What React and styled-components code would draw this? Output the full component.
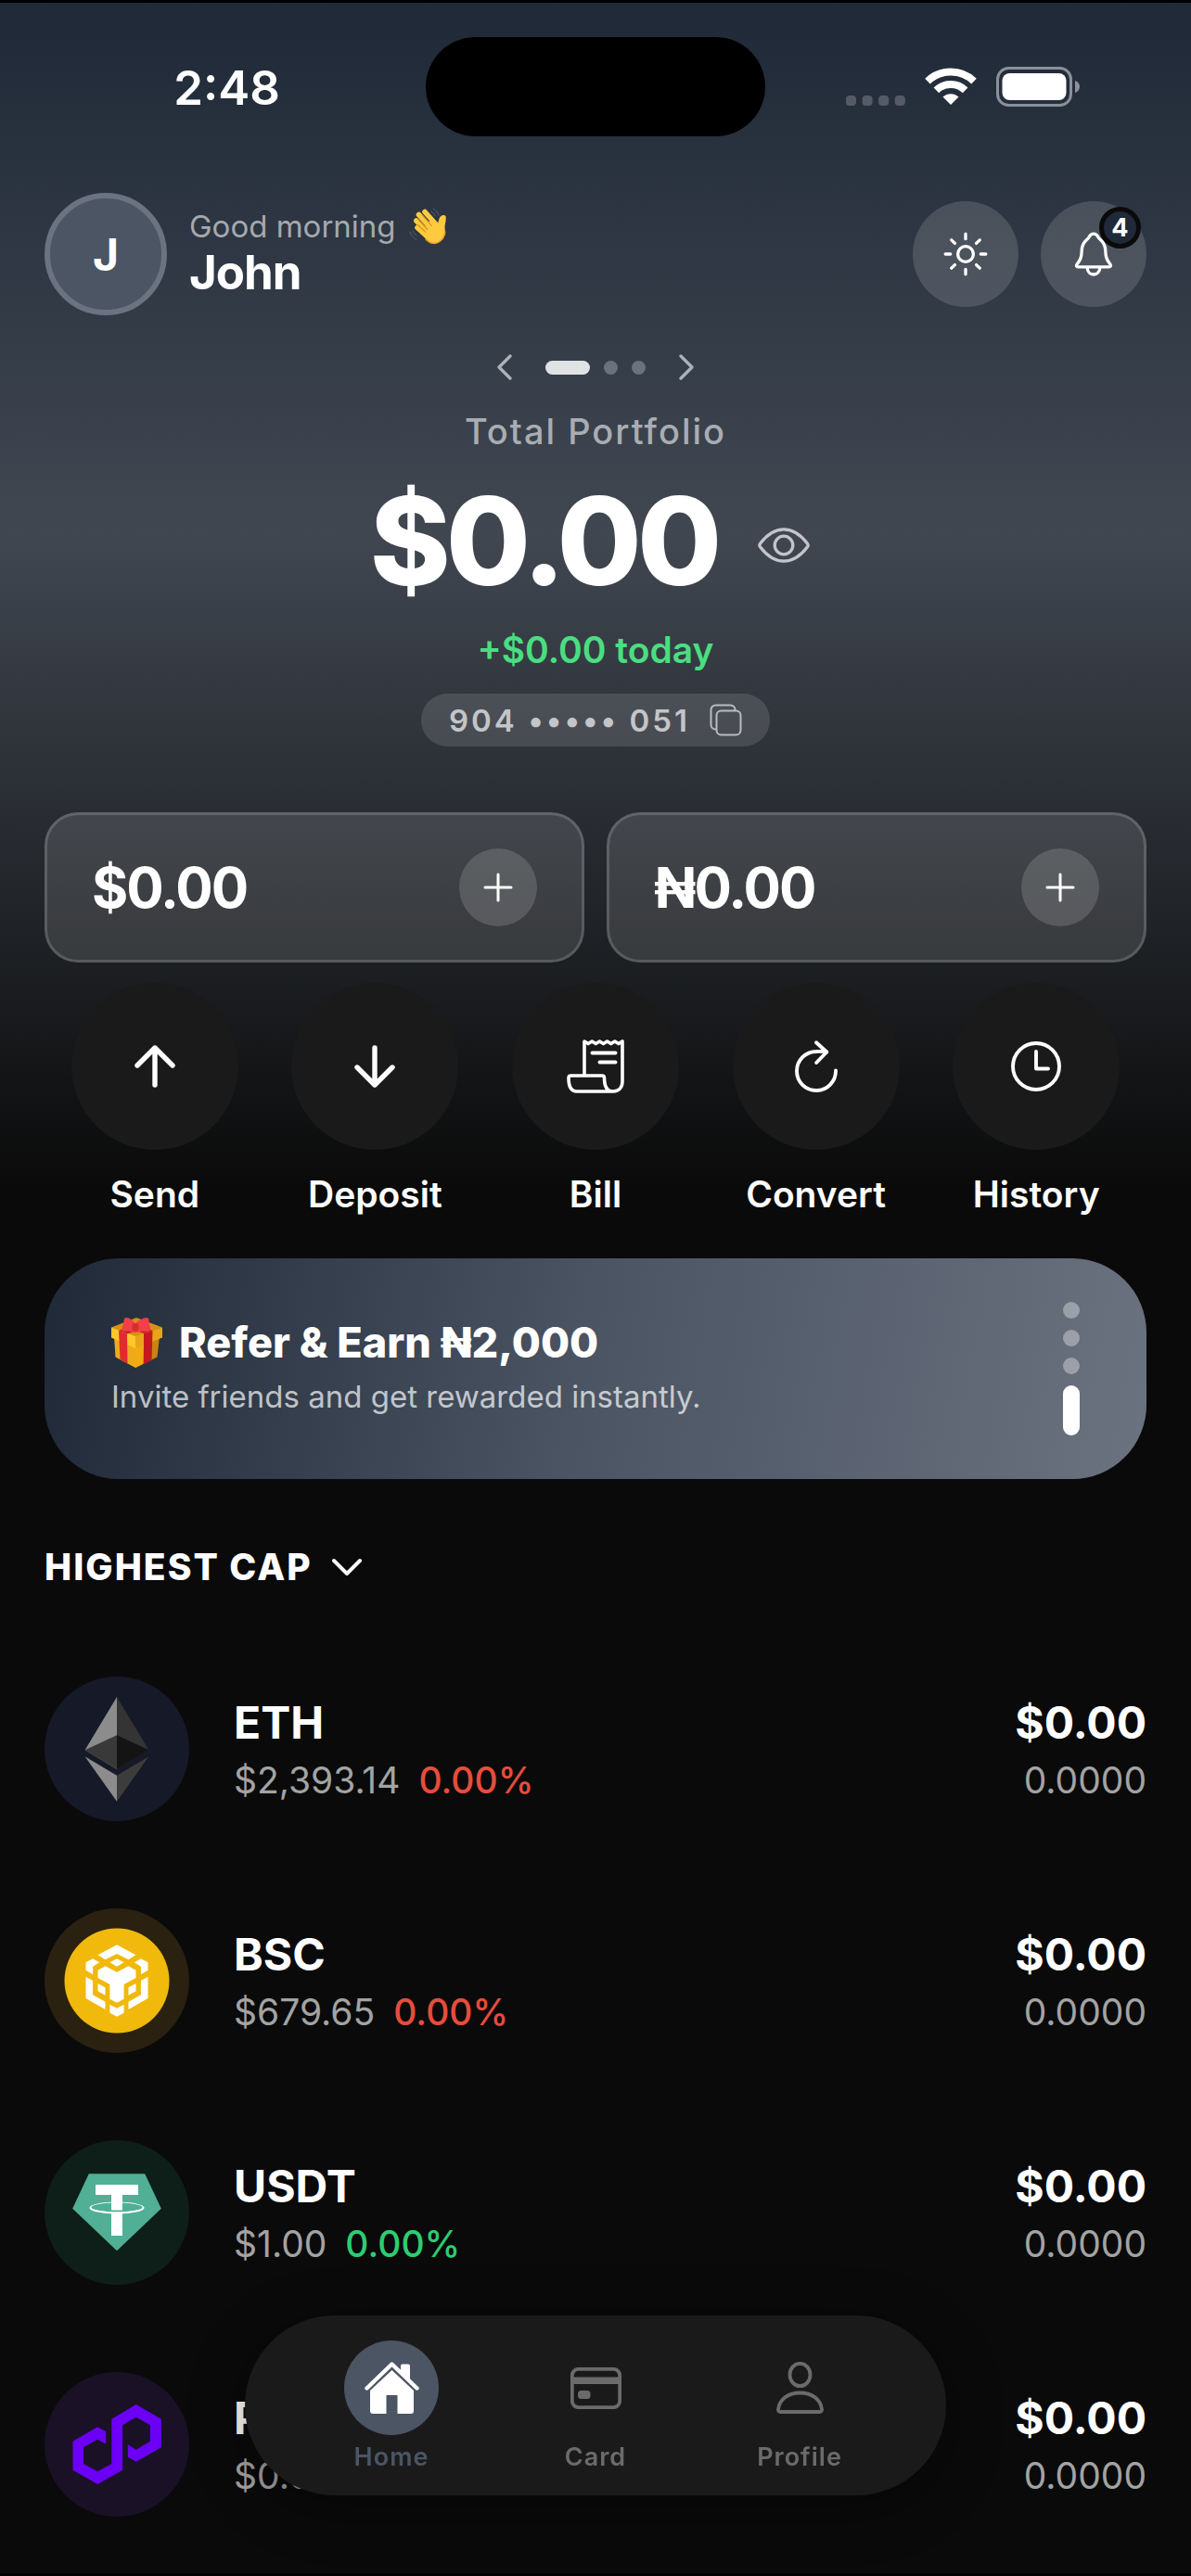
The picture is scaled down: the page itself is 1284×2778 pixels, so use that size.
import { useState } from 'react'
import styled, { createGlobalStyle } from 'styled-components'

const acoes = [
    { nome: 'Send', icone: <IconeSeta /> },
    { nome: 'Deposit', icone: <IconeSeta baixo /> },
    { nome: 'Bill', icone: <IconeConta /> },
    { nome: 'Convert', icone: <IconeConverter /> },
    { nome: 'History', icone: <IconeRelogio /> }
]

const moedas = [
    { nome: 'ETH', preco: '$2,393.14', variacao: '0.00%', alta: false, fundo: '#161928', logo: <LogoEth /> },
    { nome: 'BSC', preco: '$679.65', variacao: '0.00%', alta: false, fundo: '#2a2110', logo: <LogoBsc /> },
    { nome: 'USDT', preco: '$1.00', variacao: '0.00%', alta: true, fundo: '#0e1e19', logo: <LogoUsdt /> },
    { nome: 'POL', preco: '$0.09', variacao: '0.00%', alta: false, fundo: '#1a1127', logo: <LogoPol /> }
]

const abas = [
    { nome: 'Home', icone: <IconeCasa /> },
    { nome: 'Card', icone: <IconeCartao /> },
    { nome: 'Profile', icone: <IconePerfil /> }
]

function App() {
    const [visivel, setVisivel] = useState(true)
    const [pagina, setPagina] = useState(0)
    const [aba, setAba] = useState('Home')

    return (
        <>
            <GlobalStyle />
            <Tela>
                <BarraStatus>
                    <Hora>2:48</Hora>
                    <Ilha />
                    <Sinais>
                        <IconeSinal />
                        <IconeWifi />
                        <IconeBateria />
                    </Sinais>
                </BarraStatus>

                <Cabecalho>
                    <Avatar>J</Avatar>
                    <div>
                        <Saudacao>Good morning <IconeMao /></Saudacao>
                        <NomeUsuario>John</NomeUsuario>
                    </div>
                    <BotoesTopo>
                        <BotaoTopo aria-label="Theme"><IconeSol /></BotaoTopo>
                        <BotaoTopo aria-label="Notifications">
                            <IconeSino />
                            <Contador>4</Contador>
                        </BotaoTopo>
                    </BotoesTopo>
                </Cabecalho>

                <Saldo>
                    <Paginador>
                        <BotaoLimpo aria-label="Previous" onClick={() => setPagina((pagina + 2) % 3)}><IconeDivisa /></BotaoLimpo>
                        <Pontos>
                            {[0, 1, 2].map(p => <Ponto key={p} $ativo={p === pagina} />)}
                        </Pontos>
                        <BotaoLimpo aria-label="Next" onClick={() => setPagina((pagina + 1) % 3)}><IconeDivisa direita /></BotaoLimpo>
                    </Paginador>
                    <RotuloSaldo>Total Portfolio</RotuloSaldo>
                    <LinhaSaldo>
                        <ValorSaldo>{visivel ? '$0.00' : '••••'}</ValorSaldo>
                        <BotaoOlho aria-label="Toggle balance" onClick={() => setVisivel(!visivel)}><IconeOlho /></BotaoOlho>
                    </LinhaSaldo>
                    <Hoje>+$0.00 today</Hoje>
                    <BotaoConta aria-label="Copy account number">
                        <span>904 ••••• 051</span>
                        <IconeCopiar />
                    </BotaoConta>
                </Saldo>

                <Carteiras>
                    {['$0.00', '₦0.00'].map(valor => (
                        <Carteira key={valor}>
                            <ValorCarteira>{valor}</ValorCarteira>
                            <BotaoMais aria-label="Add money"><IconeMais /></BotaoMais>
                        </Carteira>
                    ))}
                </Carteiras>

                <Acoes>
                    {acoes.map(a => (
                        <BotaoAcao key={a.nome}>
                            <CirculoAcao>{a.icone}</CirculoAcao>
                            {a.nome}
                        </BotaoAcao>
                    ))}
                </Acoes>

                <Banner>
                    <div>
                        <TituloBanner><IconePresente />Refer &amp; Earn ₦2,000</TituloBanner>
                        <TextoBanner>Invite friends and get rewarded instantly.</TextoBanner>
                    </div>
                    <Indicadores>
                        <Indicador />
                        <Indicador />
                        <Indicador />
                        <Indicador $ativo />
                    </Indicadores>
                </Banner>

                <BotaoOrdem>
                    HIGHEST CAP
                    <IconeAbrir />
                </BotaoOrdem>

                <Lista>
                    {moedas.map(m => (
                        <LinhaMoeda key={m.nome}>
                            <CirculoMoeda $fundo={m.fundo}>{m.logo}</CirculoMoeda>
                            <Dados>
                                <NomeMoeda>{m.nome}</NomeMoeda>
                                <Preco>{m.preco}<Variacao $alta={m.alta}>{m.variacao}</Variacao></Preco>
                            </Dados>
                            <Posse>
                                <NomeMoeda>$0.00</NomeMoeda>
                                <Preco>0.0000</Preco>
                            </Posse>
                        </LinhaMoeda>
                    ))}
                </Lista>

                <AreaMenu>
                    <Menu>
                        {abas.map(a => (
                            <BotaoAba key={a.nome} $ativo={a.nome === aba} onClick={() => setAba(a.nome)}>
                                <CirculoAba $ativo={a.nome === aba}>{a.icone}</CirculoAba>
                                {a.nome}
                            </BotaoAba>
                        ))}
                    </Menu>
                </AreaMenu>
            </Tela>
        </>
    )
}

function IconeSinal() {
    return (
        <svg width="64" height="40" viewBox="0 0 64 40" fill="#fff" fillOpacity="0.22">
            <rect x="0" y="29" width="11" height="11" rx="4" />
            <rect x="17.6" y="29" width="11" height="11" rx="4" />
            <rect x="35.2" y="29" width="11" height="11" rx="4" />
            <rect x="52.8" y="29" width="11" height="11" rx="4" />
        </svg>
    )
}

function IconeWifi() {
    return (
        <svg width="56" height="41" viewBox="0 0 56 41" fill="none" stroke="#fff" strokeWidth="8">
            <path d="M3 14.6a36 36 0 0 1 50 0" />
            <path d="M12.4 24.3a22.5 22.5 0 0 1 31.2 0" />
            <path d="M19.5 31.5a12.5 12.5 0 0 1 17 0L28 40z" fill="#fff" stroke="none" />
        </svg>
    )
}

function IconeBateria() {
    return (
        <svg width="90" height="43" viewBox="0 0 90 43">
            <rect x="1.5" y="1.5" width="79" height="40" rx="12" fill="none" stroke="#8b9099" strokeWidth="3" />
            <rect x="6.5" y="7" width="69" height="29" rx="8" fill="#fff" />
            <path d="M85 15c3.3 1 5 3.6 5 6.5s-1.7 5.500-5 6.500z" fill="#8b9099" />
        </svg>
    )
}

function IconeMao() {
    return (
        <svg width="42" height="40" viewBox="0 0 42 40" fill="none" strokeLinecap="round" role="img" aria-label="waving hand">
            <path d="M26 1c3 1.5 5 4 6 7M24 4c2 1 3.5 3 4.2 5M1 26c1 3.5 3.5 6.5 7 8.5M4 25c.8 2 2 3.5 4 5" stroke="#59616b" strokeWidth="1" />
            <path d="M39.5 9c.8 5-.7 7-1 12 1 7-.5 12-5 15.5-5 3.500-10 2.500-14-1.500L12 27 24 12l7 6c.8-4 1.500-8 4-9.500 1.500-.8 3.500-.8 4.500.5z" fill="#ffca3e" />
            <path d="M17 4.500L30 19M10.500 7.500L24 22M7.800 14L20 26M9 21.500l10 9" stroke="#ffca3e" strokeWidth="5.6" />
            <path d="M14.300 8l10 11.500M9.800 12.600L20 23.500M9.500 18.500l8 7.700" stroke="#d58f13" strokeWidth="1.1" />
            <path d="M18 34c5 5.500 11 5.500 15.500 2 3-2.300 5-6 5.300-10" stroke="#e8a21a" strokeWidth="1.5" />
        </svg>
    )
}

function IconePresente() {
    return (
        <svg width="55" height="54" viewBox="0 0 55 54" role="img" aria-label="gift">
            <path d="M3 20l23 11v23L4.500 42.500z" fill="#efa91c" />
            <path d="M52 20L26 31v23l23.500-11.500z" fill="#c98412" />
            <path d="M26 31l9-4-1 23-8 4z" fill="#f2ac12" />
            <path d="M0 10.500L27 0l28 10.500L26 21z" fill="#d7920f" />
            <path d="M0 10.500L26 20v13L0 21.500z" fill="#ffc72b" />
            <path d="M55 10.500L26 20v13l29-11.500z" fill="#e9a519" />
            <path d="M8 14l9 3.500.5 32-8-4.500z" fill="#e32a2f" />
            <path d="M35 17l9.500-3-1 32-8.500 4z" fill="#c4191f" />
            <path d="M8 14l14-6 14 2 8.500 4-9.500 3-8-3-10 3.500z" fill="#c9222a" />
            <path d="M26 16c-4-1-9-2-13-1-3-2-1-5 0-8 1-4 0-7 3-7 4 0 7 3 10 6 4-3 8-6 12-6 4 1 2 4 3 7 .7 3 2 6-1 8-5-1-9 0-14 1z" fill="#f23f48" />
            <rect x="22.5" y="6" width="7" height="8.5" rx="3" fill="#d92a35" />
        </svg>
    )
}

function IconeSol() {
    return (
        <svg width="48" height="48" viewBox="0 0 48 48" fill="none" stroke="#fff" strokeWidth="3.3" strokeLinecap="round">
            <circle cx="24" cy="24" r="8.4" />
            <path d="M24 2.200v5.500M24 40.300v5.500M2.200 24h5.500M40.300 24h5.500M8.800 8.800l3.600 3.600M35.600 35.600l3.600 3.600M8.800 39.200l3.600-3.600M35.600 12.400l3.600-3.600" />
        </svg>
    )
}

function IconeSino() {
    return (
        <svg width="48" height="48" viewBox="0 0 48 48" fill="none" stroke="#fff" strokeWidth="3.3" strokeLinejoin="round">
            <path d="M24 2.200c-2.600 0-4 1.600-5 3.600C18 8.600 11.200 10 11.200 20.500c0 8-2.500 11-5.200 14.500-1 1.600-.3 2.900 1.200 2.900h33.600c1.500 0 2.200-1.300 1.200-2.900-2.700-3.500-5.200-6.500-5.200-14.500C36.800 10 30 8.600 29 5.800c-1-2-2.400-3.600-5-3.600z" />
            <path d="M17.200 38.500c0 10 13.600 10 13.600 0" />
        </svg>
    )
}

function IconeDivisa({ direita }) {
    return (
        <svg width="16" height="28" viewBox="0 0 16 28" fill="none" stroke="#aeb1b7" strokeWidth="3.3" strokeLinecap="round" strokeLinejoin="round">
            <path d={direita ? 'M2 2l12 12L2 26' : 'M14 2L2 14l12 12'} />
        </svg>
    )
}

function IconeOlho() {
    return (
        <svg width="56" height="38" viewBox="0 0 56 38" fill="none" stroke="#c3c5c9" strokeWidth="3.3">
            <path d="M2.500 17.200C9.500 8 18 1.800 28 1.800s18.500 6.200 25.500 15.400c.9 1.200.9 2.400 0 3.600C46.500 30 38 36.200 28 36.200S9.500 30 2.500 20.800c-.9-1.200-.9-2.400 0-3.600z" />
            <circle cx="28" cy="19" r="9.8" />
        </svg>
    )
}

function IconeCopiar() {
    return (
        <svg width="35" height="35" viewBox="0 0 35 35" fill="none" stroke="#b9bbbf" strokeWidth="2">
            <rect x="7.5" y="7.5" width="26" height="26" rx="5" />
            <path d="M7.500 27.500H6.500a5 5 0 0 1-5-5V6.500a5 5 0 0 1 5-5h16a5 5 0 0 1 5 5v1" />
        </svg>
    )
}

function IconeMais() {
    return (
        <svg width="32" height="32" viewBox="0 0 32 32" stroke="#fff" strokeWidth="3" strokeLinecap="round">
            <path d="M16 2v28M2 16h28" />
        </svg>
    )
}

function IconeSeta({ baixo }) {
    return (
        <svg width="44" height="46" viewBox="0 0 44 46" fill="none" stroke="#fff" strokeWidth="5.4" strokeLinecap="round" strokeLinejoin="round">
            <path d={baixo ? 'M22 3v40M3 24l19 19 19-19' : 'M22 43V3M3 22L22 3l19 19'} />
        </svg>
    )
}

function IconeConta() {
    return (
        <svg width="62" height="58" viewBox="0 0 62 58" fill="none" stroke="#fff" strokeWidth="3.6" strokeLinecap="round" strokeLinejoin="round">
            <path d="M19 39V2l4.100 2.600L27.200 2l4.100 2.600L35.400 2l4.100 2.600L43.600 2l4.100 2.600L51.800 2l4.100 2.600L60 2v43c0 7-4 11-10 11H11C4 56 2 50 2 41.500c0-1.700.8-2.500 2.500-2.500H38c1.700 0 2.500.8 2.500 2.500C40.500 51 43 56 50 56" />
            <path d="M27.500 14.500h25M35.500 24.500h17" strokeWidth="4" />
        </svg>
    )
}

function IconeConverter() {
    return (
        <svg width="46" height="56" viewBox="0 0 46 56" fill="none" stroke="#fff" strokeWidth="3.9" strokeLinecap="round" strokeLinejoin="round">
            <path d="M34 12.500c-4-.8-8-.7-11-.5a21 21 0 1 0 21 20.500" />
            <path d="M23 2.200l11.200 10.300L23.200 24" />
        </svg>
    )
}

function IconeRelogio() {
    return (
        <svg width="54" height="54" viewBox="0 0 54 54" fill="none" stroke="#fff" strokeWidth="3.9" strokeLinecap="round" strokeLinejoin="round">
            <circle cx="27" cy="27" r="25" />
            <path d="M27 11v18.500h13" />
        </svg>
    )
}

function IconeAbrir() {
    return (
        <svg width="32" height="20" viewBox="0 0 32 20" fill="none" stroke="#fff" strokeWidth="3.9" strokeLinecap="round" strokeLinejoin="round">
            <path d="M2 3l14 14L30 3" />
        </svg>
    )
}

function IconeCasa() {
    return (
        <svg width="59" height="57" viewBox="0 0 59 57" fill="currentColor">
            <path d="M2.500 28.500l27-26 27 26" fill="none" stroke="currentColor" strokeWidth="4.4" strokeLinecap="round" strokeLinejoin="round" />
            <path d="M39 10V4.500c0-1.300.7-2 2-2h6c1.300 0 2 .7 2 2V20z" />
            <path d="M29.500 9L53 31v22c0 2-1 3-3 3H35.500V36H23.500v20H9c-2 0-3-1-3-3V31z" />
        </svg>
    )
}

function IconeCartao() {
    return (
        <svg width="55" height="45" viewBox="0 0 55 45">
            <rect x="1.8" y="1.8" width="51.4" height="41.4" rx="7" fill="none" stroke="currentColor" strokeWidth="3.8" />
            <path d="M2 10.500h51V18H2z" fill="currentColor" />
            <rect x="8" y="25" width="13.5" height="9" rx="3.5" fill="currentColor" />
        </svg>
    )
}

function IconePerfil() {
    return (
        <svg width="51" height="56" viewBox="0 0 51 56" fill="none" stroke="currentColor" strokeWidth="3.8">
            <ellipse cx="25.5" cy="14" rx="11" ry="12.2" />
            <path d="M2 51C3.500 40 13 33.500 25.500 33.500S47.500 40 49 51c.2 2-.8 3-2.500 3h-42C2.800 54 1.800 53 2 51z" />
        </svg>
    )
}

function LogoEth() {
    return (
        <svg width="156" height="156" viewBox="-78 -78 156 156">
            <path d="M0-56L-34.400 1.300 0 22z" fill="#8c8c8c" />
            <path d="M0-56L34.400 1.300 0 22z" fill="#343434" />
            <path d="M0-14.700L-34.400 1.300 0 22z" fill="#393939" />
            <path d="M0-14.700L34.400 1.300 0 22z" fill="#141414" />
            <path d="M-34.400 8.300L0 28.700v28z" fill="#8c8c8c" />
            <path d="M34.400 8.300L0 28.700v28z" fill="#3c3c3b" />
        </svg>
    )
}

function LogoBsc() {
    return (
        <svg width="156" height="156" viewBox="-78 -78 156 156" fill="#fff">
            <circle r="56.5" fill="#f0b90b" />
            <path d="M0-38.700L20.500-27.700 12.500-22.700 0-29-12.500-22.700-20.500-27.700z" />
            <path d="M0-23.700L7.600-19.700 0-15.300-7.600-19.700z" />
            <path d="M-12.500-15.700L0-9.300 12.500-15.700 20.500-11.300V-3L7.600 4V19.700L0 23.700-7.600 19.700V4L-20.500-3V-11.300z" />
            <path d="M25.900-23.700L33.500-19.700V-11.300L25.900-6.700V-15.300L18.800-19.700z" />
            <path d="M-25.900-23.700L-33.500-19.700V-11.300L-25.900-6.700V-15.300L-18.800-19.700z" />
            <path d="M20.500 3V11.300L12.500 15.700V7.300zM-20.500 3V11.300L-12.500 15.700V7.300z" />
            <path d="M33.500-4.300V19L12.500 31V22.700L25.900 15.300V0z" />
            <path d="M-33.500-4.300V19L-12.500 31V22.700L-25.900 15.300V0z" />
            <path d="M-7.600 25.700L0 29.700 7.600 25.700V34.700L0 38.700-7.600 34.700z" />
        </svg>
    )
}

function LogoUsdt() {
    return (
        <svg width="156" height="156" viewBox="-78 -78 156 156">
            <path d="M-30.200-41.700H30.200L47.800-4.300 0 41.300-47.800-4.300z" fill="#50af95" />
            <path d="M-23-30H23V-19H6V-2.500H-6V-19H-23z" fill="#fff" />
            <path d="M-6 1H6V25H-6z" fill="#fff" />
            <path fillRule="evenodd" d="M-29.600-5a29.600 6.500 0 1 1 59.200 0a29.600 6.500 0 1 1-59.200 0zM-27.600-5.600a27.600 4.900 0 1 0 55.200 0a27.600 4.900 0 1 0-55.200 0z" fill="#fff" />
        </svg>
    )
}

function LogoPol() {
    return (
        <svg width="156" height="156" viewBox="-78 -78 156 156">
            <path fill="#6c00f6" d="M20.800-43L47.800-27.300V3.300L20.800 18.700 11.800 13.700V.3L20.800 5.700 35.900-3.300V-20.700L20.800-29.300 6.100-20.700V27.700L-20.800 43-47.500 27.700V-3.300L-20.800-18.700-11.800-13.700V-.3L-20.800-5.300-35.900 3V21L-20.800 29.300-5.700 21V-27.300z" />
        </svg>
    )
}

const GlobalStyle = createGlobalStyle`
    * {
        box-sizing: border-box;
    }

    body {
        margin: 0;
        background-color: #0a0a0a;
        color: #fff;
        font-family: Inter, 'Liberation Sans', sans-serif;
    }

    p, h1, h2, ul {
        margin: 0;
        padding: 0;
    }

    button {
        padding: 0;
        border: none;
        background: none;
        color: inherit;
        font-family: inherit;
        cursor: pointer;
    }

    svg {
        display: block;
        flex-shrink: 0;
    }
`

const Tela = styled.div`
    min-height: 100vh;
    padding: 0 48px 12px;
    border-top: 3px solid #000;
    border-bottom: 3px solid #000;
    background: linear-gradient(180deg, #1f2937 0, #404751 570px, #0a0a0a 1280px);
`

const BarraStatus = styled.div`
    display: grid;
    grid-template-columns: 1fr 366px 1fr;
    align-items: center;
    justify-items: center;
    margin: 0 -18px;
    padding-top: 37px;
`

const Hora = styled.p`
    padding-top: 2px;
    font-size: 51px;
    font-weight: 600;
`

const Ilha = styled.div`
    width: 100%;
    height: 107px;
    border-radius: 54px;
    background-color: #000;
`

const Sinais = styled.div`
    display: flex;
    align-items: center;
    gap: 21px;
    padding-right: 4px;
`

const Cabecalho = styled.header`
    display: flex;
    align-items: center;
    margin-top: 61px;
`

const Avatar = styled.div`
    display: flex;
    align-items: center;
    justify-content: center;
    width: 132px;
    height: 132px;
    margin-right: 24px;
    border: 6px solid #6b7280;
    border-radius: 50%;
    background-color: #4b5563;
    font-size: 48px;
    font-weight: 700;
`

const Saudacao = styled.p`
    display: flex;
    align-items: center;
    gap: 14px;
    color: #a5a9af;
    font-size: 33px;
    line-height: 40px;
`

const NomeUsuario = styled.h1`
    font-size: 51px;
    font-weight: 700;
    line-height: 60px;
    letter-spacing: -1px;
`

const BotoesTopo = styled.div`
    display: flex;
    gap: 24px;
    margin-left: auto;
`

const BotaoTopo = styled.button`
    display: flex;
    align-items: center;
    justify-content: center;
    position: relative;
    width: 114px;
    height: 114px;
    border-radius: 50%;
    background-color: rgba(255, 255, 255, 0.14);
`

const Contador = styled.span`
    position: absolute;
    top: 6px;
    right: 6px;
    width: 45px;
    height: 45px;
    border: 5px solid #0a0a0a;
    border-radius: 50%;
    background-color: #1f2937;
    font-size: 27px;
    font-weight: 700;
    line-height: 35px;
    text-align: center;
`

const Saldo = styled.section`
    display: flex;
    flex-direction: column;
    align-items: center;
`

const Paginador = styled.div`
    display: flex;
    align-items: center;
    gap: 36px;
    height: 32px;
    margin-top: 40px;
`

const BotaoLimpo = styled.button`
    display: flex;
`

const Pontos = styled.div`
    display: flex;
    gap: 15px;
`

const Ponto = styled.span`
    width: ${p => p.$ativo ? '48px' : '15px'};
    height: 15px;
    border-radius: 8px;
    background-color: ${p => p.$ativo ? '#e1e2e4' : '#6b727b'};
`

const RotuloSaldo = styled.p`
    margin-top: 29px;
    color: #a9adb3;
    font-size: 38px;
    font-weight: 500;
    line-height: 48px;
    letter-spacing: 2px;
`

const LinhaSaldo = styled.div`
    display: flex;
    align-items: center;
    gap: 32px;
    margin-top: 24px;
`

const ValorSaldo = styled.p`
    font-size: 132px;
    font-weight: 800;
    line-height: 140px;
    letter-spacing: -5px;
`

const BotaoOlho = styled.button`
    padding: 20px 12px 10px;
`

const Hoje = styled.p`
    margin-top: 24px;
    color: #4ade80;
    font-size: 39px;
    font-weight: 600;
    line-height: 48px;
`

const BotaoConta = styled.button`
    display: flex;
    align-items: center;
    gap: 21px;
    height: 57px;
    margin-top: 23px;
    padding: 0 30px;
    border-radius: 29px;
    background-color: rgba(255, 255, 255, 0.12);
    color: #c3c5c9;
    font-size: 33px;
    font-weight: 600;
    letter-spacing: 3px;
`

const Carteiras = styled.section`
    display: grid;
    grid-template-columns: 1fr 1fr;
    gap: 24px;
    margin-top: 71px;
`

const Carteira = styled.div`
    display: flex;
    align-items: center;
    justify-content: space-between;
    height: 162px;
    padding: 0 48px;
    border: 3px solid rgba(255, 255, 255, 0.16);
    border-radius: 36px;
    background-color: rgba(255, 255, 255, 0.12);
`

const ValorCarteira = styled.p`
    font-size: 60px;
    font-weight: 700;
    letter-spacing: -2px;
`

const BotaoMais = styled.button`
    display: flex;
    align-items: center;
    justify-content: center;
    width: 84px;
    height: 84px;
    border-radius: 50%;
    background-color: rgba(255, 255, 255, 0.15);
`

const Acoes = styled.section`
    display: grid;
    grid-template-columns: repeat(5, 1fr);
    margin-top: 22px;
`

const BotaoAcao = styled.button`
    display: flex;
    flex-direction: column;
    align-items: center;
    gap: 24px;
    font-size: 39px;
    font-weight: 600;
    line-height: 48px;
`

const CirculoAcao = styled.span`
    display: flex;
    align-items: center;
    justify-content: center;
    width: 180px;
    height: 180px;
    border-radius: 50%;
    background-color: #1a1a1a;
`

const Banner = styled.section`
    display: flex;
    align-items: center;
    justify-content: space-between;
    height: 238px;
    margin-top: 45px;
    padding: 0 72px;
    border-radius: 80px;
    background: linear-gradient(100deg, #1f2937, #4b5563 50%, #6b7280);
`

const TituloBanner = styled.h2`
    display: flex;
    align-items: center;
    gap: 18px;
    font-size: 45px;
    font-weight: 800;
    line-height: 60px;
`

const TextoBanner = styled.p`
    color: rgba(255, 255, 255, 0.7);
    font-size: 33px;
    line-height: 56px;
`

const Indicadores = styled.div`
    display: flex;
    flex-direction: column;
    gap: 12px;
`

const Indicador = styled.span`
    width: 18px;
    height: ${p => p.$ativo ? '54px' : '18px'};
    border-radius: 9px;
    background-color: ${p => p.$ativo ? '#fff' : 'rgba(255, 255, 255, 0.35)'};
`

const BotaoOrdem = styled.button`
    display: flex;
    align-items: center;
    gap: 21px;
    margin-top: 71px;
    font-size: 39px;
    font-weight: 800;
    line-height: 48px;
    letter-spacing: 2px;
`

const Lista = styled.ul`
    margin-top: 47px;
    list-style: none;
`

const LinhaMoeda = styled.li`
    display: flex;
    align-items: center;
    gap: 48px;
    padding: 47px 0;
`

const CirculoMoeda = styled.div`
    width: 156px;
    height: 156px;
    border-radius: 50%;
    background-color: ${p => p.$fundo};
`

const Dados = styled.div`
    padding-top: 8px;
`

const NomeMoeda = styled.p`
    font-size: 48px;
    font-weight: 700;
    line-height: 60px;
`

const Preco = styled.p`
    color: #a3a3a3;
    font-size: 39px;
    line-height: 64px;
`

const Variacao = styled.span`
    margin-left: 20px;
    color: ${p => p.$alta ? '#2ecc71' : '#e74c3c'};
    font-weight: 500;
`

const Posse = styled(Dados)`
    margin-left: auto;
    text-align: right;
`

const AreaMenu = styled.div`
    display: flex;
    justify-content: center;
    position: fixed;
    right: 0;
    bottom: 87px;
    left: 0;
`

const Menu = styled.nav`
    display: flex;
    padding: 27px 48px 21px;
    border-radius: 97px;
    background-color: #1a1a1a;
    box-shadow: 0 12px 60px rgba(0, 0, 0, 0.4);
`

const BotaoAba = styled.button`
    display: flex;
    flex-direction: column;
    align-items: center;
    gap: 4px;
    width: 220px;
    color: ${p => p.$ativo ? '#4b5563' : '#6b6b6b'};
    font-size: 27px;
    font-weight: 600;
    line-height: 40px;
    letter-spacing: 1px;
`

const CirculoAba = styled.span`
    display: flex;
    align-items: center;
    justify-content: center;
    width: 102px;
    height: 102px;
    border-radius: 50%;
    background-color: ${p => p.$ativo ? '#4b5563' : 'transparent'};
    color: ${p => p.$ativo ? '#fff' : 'inherit'};
`

export default App
